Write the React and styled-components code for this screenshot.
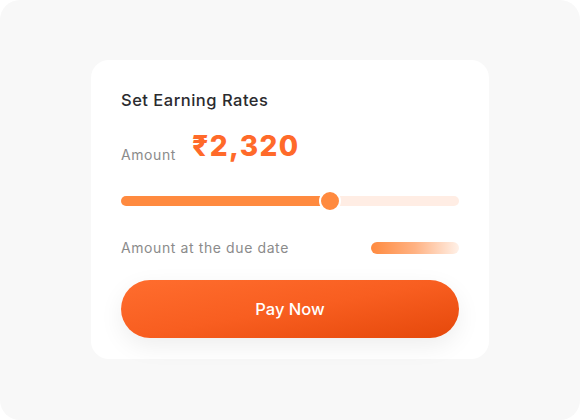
import React from "react";
import styled, { createGlobalStyle } from "styled-components";

const Global = createGlobalStyle`
  html, body { margin: 0; padding: 0; background: #ffffff; }
  body { font-family: Inter, "Noto Sans", sans-serif; -webkit-font-smoothing: antialiased; }
`;

const Frame = styled.div`
  width: 580px;
  height: 420px;
  box-sizing: border-box;
  background: #f8f8f8;
  border-radius: 20px;
  display: flex;
  align-items: flex-start;
  justify-content: center;
  padding-top: 60px;
`;

const Card = styled.div`
  width: 398px;
  height: 299px;
  box-sizing: border-box;
  background: #ffffff;
  border-radius: 18px;
  padding: 30px 30px 0 30px;
  display: flex;
  flex-direction: column;
`;

const Title = styled.div`
  font-size: 16.5px;
  font-weight: 500;
  color: #2b2b2e;
  line-height: 20px;
  letter-spacing: 0.5px;
`;

const AmountRow = styled.div`
  display: flex;
  align-items: flex-start;
  gap: 16px;
  margin-top: 20px;
`;

const Label = styled.span`
  font-size: 14px;
  line-height: 20px;
  color: #8b8b8b;
  font-weight: 400;
  letter-spacing: 0.6px;
  margin-top: ${(p) => p.$offset || 0}px;
`;

const Value = styled.span`
  font-size: 28px;
  line-height: 32px;
  font-weight: 800;
  color: #ff6a2a;
  letter-spacing: 1.4px;
`;

const Slider = styled.div`
  position: relative;
  height: 10px;
  margin-top: 31px;
  display: flex;
  align-items: center;
`;

const Fill = styled.div`
  height: 10px;
  border-radius: 5px;
  background: #ff8a3f;
  flex: none;
`;

const Rest = styled.div`
  height: 10px;
  border-radius: 5px;
  background: #ffede4;
  flex: 1;
`;

const Thumb = styled.div`
  position: absolute;
  top: 50%;
  width: 18px;
  height: 18px;
  border-radius: 50%;
  background: #ff8a3f;
  border: 2px solid #ffffff;
  transform: translate(-50%, -50%);
`;

const DueRow = styled.div`
  display: flex;
  align-items: center;
  justify-content: space-between;
  margin-top: 32px;
`;

const DueBar = styled.div`
  width: 88px;
  height: 12px;
  border-radius: 6px;
  background: linear-gradient(90deg, #ff8a3f 0%, #ffb283 50%, #fff1e8 100%);
`;

const PayButton = styled.button`
  margin-top: 22px;
  height: 58px;
  width: 100%;
  border: none;
  border-radius: 29px;
  background: linear-gradient(170deg, #ff6d2e 0%, #f85e20 50%, #e5480b 100%);
  color: #ffffff;
  font-family: Inter, "Noto Sans", sans-serif;
  font-size: 16.5px;
  font-weight: 500;
  box-shadow: 0 8px 24px rgba(0, 0, 0, 0.07);
  cursor: pointer;
`;

export default function App() {
  const pct = 61.8;
  return (
    <>
      <Global />
      <Frame>
        <Card>
          <Title>Set Earning Rates</Title>
          <AmountRow>
            <Label $offset={15}>Amount</Label>
            <Value>₹2,320</Value>
          </AmountRow>
          <Slider>
            <Fill style={{ width: `${pct}%` }} />
            <Rest />
            <Thumb style={{ left: `${pct}%` }} />
          </Slider>
          <DueRow>
            <Label>Amount at the due date</Label>
            <DueBar />
          </DueRow>
          <PayButton>Pay Now</PayButton>
        </Card>
      </Frame>
    </>
  );
}
